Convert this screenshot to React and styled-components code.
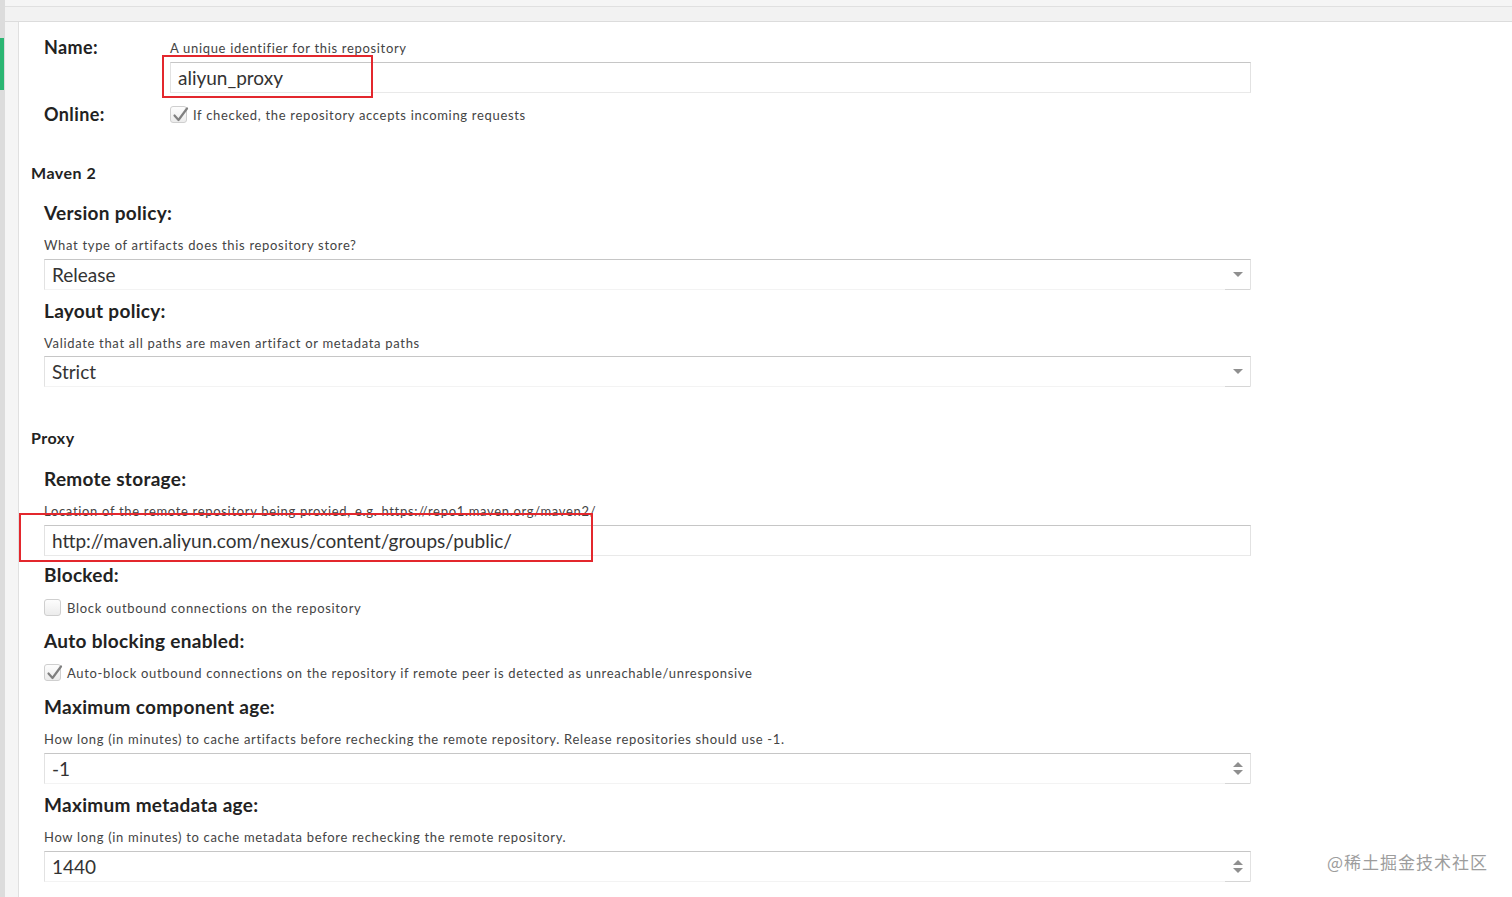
import React from 'react';
import styled, { createGlobalStyle } from 'styled-components';

const GlobalStyle = createGlobalStyle`
  html, body {
    margin: 0;
    padding: 0;
    background: #f4f4f4;
    overflow: hidden;
  }
  body {
    font-family: Lato, "Open Sans", "Noto Sans", sans-serif;
    color: #333;
  }
`;

const Page = styled.div`
  display: flex;
  height: 897px;
  position: relative;
`;

const Rail = styled.div`
  width: 5px;
  flex: none;
  background: #dcdcdc;
`;

const RailMark = styled.div`
  margin-top: 38px;
  width: 4px;
  height: 52px;
  background: #2bb673;
`;

const Main = styled.div`
  flex: 1;
  display: flex;
  flex-direction: column;
  background: #f5f5f5;
`;

const TopBar = styled.div`
  margin-top: 6px;
  height: 14px;
  border-top: 1px solid #e0e0e0;
  border-bottom: 1px solid #dcdcdc;
  background: #f2f2f2;
`;

const Panel = styled.div`
  flex: 1;
  margin-left: 13px;
  background: #fff;
  border-left: 1px solid #e0e0e0;
  padding: 18px 0 0 12px;
`;

const Form = styled.div`
  width: 1220px;
`;

const Indent = styled.div`
  padding-left: 13px;
  width: 1207px;
`;

const NameGrid = styled.div`
  display: grid;
  grid-template-columns: 126px 1fr;
  align-items: start;
`;

const SideLabel = styled.div`
  font-size: 18px;
  font-weight: 700;
  letter-spacing: 0.4px;
  color: #222;
  line-height: 16px;
  margin-top: ${({ $top }) => $top || 0}px;
`;

const SectionTitle = styled.div`
  font-size: 16px;
  font-weight: 700;
  letter-spacing: 0.5px;
  color: #222;
  line-height: 20px;
  margin-top: ${({ $top }) => $top}px;
`;

const FieldLabel = styled.div`
  font-size: 19px;
  font-weight: 700;
  letter-spacing: 0.3px;
  color: #222;
  line-height: 22px;
  margin-top: ${({ $top }) => $top}px;
`;

const Help = styled.div`
  font-size: 13px;
  letter-spacing: 0.68px;
  color: #444;
  line-height: 16px;
  white-space: nowrap;
  margin-top: ${({ $top }) => ($top === undefined ? 13 : $top)}px;
`;

const Box = styled.div`
  position: relative;
  display: flex;
  align-items: stretch;
  height: 31px;
  box-sizing: border-box;
  margin-top: ${({ $top }) => ($top === undefined ? 6 : $top)}px;
  border: 1px solid #e2e2e2;
  border-top-color: #c6c6c6;
  border-bottom-color: ${({ $trigger }) => ($trigger ? '#f3f3f3' : '#e9e9e9')};
`;

const Value = styled.div`
  flex: 1;
  padding-left: 7px;
  font-size: 19px;
  line-height: 29px;
  color: #333;
  white-space: nowrap;
`;

const Trigger = styled.div`
  width: 25px;
  margin-bottom: -1px;
  border-bottom: 1px solid #d6d6d6;
  display: flex;
  flex-direction: column;
  align-items: center;
  justify-content: center;
  gap: 3px;
`;

const ArrowDown = styled.div`
  width: 0;
  height: 0;
  border-left: 5px solid transparent;
  border-right: 5px solid transparent;
  border-top: 5px solid #8f8f8f;
`;

const ArrowUp = styled.div`
  width: 0;
  height: 0;
  border-left: 5px solid transparent;
  border-right: 5px solid transparent;
  border-bottom: 5px solid #8f8f8f;
`;

const Highlight = styled.div`
  position: absolute;
  left: ${({ $left }) => $left}px;
  top: ${({ $top }) => $top}px;
  width: ${({ $w }) => $w}px;
  height: ${({ $h }) => $h}px;
  border: 2px solid #e3272d;
  box-sizing: border-box;
  pointer-events: none;
`;

const CheckRow = styled.div`
  display: flex;
  align-items: center;
  gap: 6px;
  height: 17px;
  margin-top: ${({ $top }) => $top}px;
  font-size: 13px;
  letter-spacing: 0.68px;
  white-space: nowrap;
  color: #444;
`;

const CheckBox = styled.div`
  position: relative;
  width: 17px;
  height: 17px;
  box-sizing: border-box;
  border: 1px solid #cfcfcf;
  border-radius: 3px;
  background: linear-gradient(#fdfdfd, #ececec);
  flex: none;
  svg {
    position: absolute;
    left: 1px;
    top: -2px;
  }
`;

const Watermark = styled.div`
  position: absolute;
  left: 1327px;
  top: 851px;
  font-size: 17px;
  line-height: 22px;
  color: #9d9d9d;
  font-family: "Noto Sans CJK SC", "Noto Sans", sans-serif;
  letter-spacing: 1px;
`;

function Check({ checked }) {
  return (
    <CheckBox>
      {checked && (
        <svg width="17" height="18" viewBox="0 0 17 18">
          <path
            d="M2.5 10.5 L6.5 15 L15 3.5"
            fill="none"
            stroke="#808080"
            strokeWidth="2.2"
            strokeLinecap="round"
            strokeLinejoin="round"
          />
        </svg>
      )}
    </CheckBox>
  );
}

function Combo({ value, top }) {
  return (
    <Box $trigger $top={top}>
      <Value>{value}</Value>
      <Trigger>
        <ArrowDown />
      </Trigger>
    </Box>
  );
}

function NumberField({ value, top }) {
  return (
    <Box $trigger $top={top}>
      <Value>{value}</Value>
      <Trigger>
        <ArrowUp />
        <ArrowDown />
      </Trigger>
    </Box>
  );
}

export default function App() {
  return (
    <>
      <GlobalStyle />
      <Page>
        <Rail>
          <RailMark />
        </Rail>
        <Main>
          <TopBar />
          <Panel>
            <Form>
              <Indent>
                <NameGrid>
                  <SideLabel $top={-1}>Name:</SideLabel>
                  <div>
                    <Help $top={0}>A unique identifier for this repository</Help>
                    <Box>
                      <Value>aliyun_proxy</Value>
                      <Highlight $left={-9} $top={-8} $w={211} $h={43} />
                    </Box>
                  </div>
                  <SideLabel $top={13}>Online:</SideLabel>
                  <CheckRow $top={13}>
                    <Check checked />
                    If checked, the repository accepts incoming requests
                  </CheckRow>
                </NameGrid>
              </Indent>

              <SectionTitle $top={40}>Maven 2</SectionTitle>
              <Indent>
                <FieldLabel $top={19}>Version policy:</FieldLabel>
                <Help>What type of artifacts does this repository store?</Help>
                <Combo value="Release" />
                <FieldLabel $top={10}>Layout policy:</FieldLabel>
                <Help>Validate that all paths are maven artifact or metadata paths</Help>
                <Combo value="Strict" top={5} />
              </Indent>

              <SectionTitle $top={41}>Proxy</SectionTitle>
              <Indent>
                <FieldLabel $top={20}>Remote storage:</FieldLabel>
                <Help>
                  Location of the remote repository being proxied, e.g. https://repo1.maven.org/maven2/
                </Help>
                <Box>
                  <Value>http://maven.aliyun.com/nexus/content/groups/public/</Value>
                  <Highlight $left={-26} $top={-13} $w={574} $h={49} />
                </Box>
                <FieldLabel $top={8}>Blocked:</FieldLabel>
                <CheckRow $top={13}>
                  <Check />
                  Block outbound connections on the repository
                </CheckRow>
                <FieldLabel $top={14}>Auto blocking enabled:</FieldLabel>
                <CheckRow $top={12}>
                  <Check checked />
                  Auto-block outbound connections on the repository if remote peer is detected as unreachable/unresponsive
                </CheckRow>
                <FieldLabel $top={15}>Maximum component age:</FieldLabel>
                <Help>
                  How long (in minutes) to cache artifacts before rechecking the remote repository. Release repositories should use -1.
                </Help>
                <NumberField value="-1" />
                <FieldLabel $top={10}>Maximum metadata age:</FieldLabel>
                <Help>
                  How long (in minutes) to cache metadata before rechecking the remote repository.
                </Help>
                <NumberField value="1440" />
              </Indent>
            </Form>
          </Panel>
        </Main>
        <Watermark>@稀土掘金技术社区</Watermark>
      </Page>
    </>
  );
}
